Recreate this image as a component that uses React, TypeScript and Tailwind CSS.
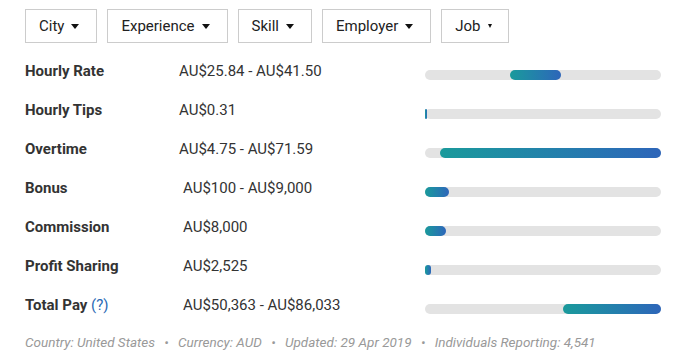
const filters = [
  { label: "City", small: false },
  { label: "Experience", small: false },
  { label: "Skill", small: false },
  { label: "Employer", small: false },
  { label: "Job", small: true },
];

const rows = [
  { label: "Hourly Rate", value: "AU$25.84 - AU$41.50", from: 36, to: 57.5, shift: false },
  { label: "Hourly Tips", value: "AU$0.31", from: 0, to: 0.8, shift: false },
  { label: "Overtime", value: "AU$4.75 - AU$71.59", from: 6.4, to: 100, shift: false },
  { label: "Bonus", value: "AU$100 - AU$9,000", from: 0, to: 10, shift: true },
  { label: "Commission", value: "AU$8,000", from: 0, to: 8.8, shift: true },
  { label: "Profit Sharing", value: "AU$2,525", from: 0, to: 2.6, shift: true },
  { label: "Total Pay", value: "AU$50,363 - AU$86,033", from: 58.5, to: 100, shift: true, help: true },
];

function Caret({ small }: { small: boolean }) {
  return small ? (
    <span className="inline-block w-0 h-0 border-l-[2.5px] border-r-[2.5px] border-t-[4px] border-l-transparent border-r-transparent border-t-[#111]" />
  ) : (
    <span className="inline-block w-0 h-0 border-l-[4.5px] border-r-[4.5px] border-t-[5px] border-l-transparent border-r-transparent border-t-[#111]" />
  );
}

export default function App() {
  return (
    <div className="w-[679px] h-[361px] bg-white text-[#333] font-['Roboto',sans-serif] overflow-hidden">
      {/* filters */}
      <div className="flex gap-[10px] pl-[25px] pt-[9px]">
        {filters.map((f) => (
          <div
            key={f.label}
            className={`h-[34px] flex items-center gap-[7px] pl-[13px] border border-[#cccccc] bg-white text-[15px] text-[#222] ${f.small ? "pr-[16px]" : "pr-[17px]"}`}
          >
            <span>{f.label}</span>
            <Caret small={f.small} />
          </div>
        ))}
      </div>

      {/* rows */}
      <div className="flex flex-col pl-[25px] pt-[9px]">
        {rows.map((r) => (
          <div key={r.label} className="h-[39px] flex items-center text-[15px]">
            <div className="w-[154px] font-bold">
              {r.label}
              {r.help && <span className="font-normal text-[#2a6ab5]"> (?)</span>}
            </div>
            <div className={`w-[246px] ${r.shift ? "pl-[4px]" : ""}`}>{r.value}</div>
            <div className="relative w-[236px] h-[10px] mt-[6px] rounded-full bg-[#e3e3e3]">
              <div
                className="absolute top-0 h-full rounded-full bg-gradient-to-r from-[#1a9a9b] to-[#2d65b9]"
                style={{ left: `${r.from}%`, width: `max(${r.to - r.from}%, 2px)` }}
              />
            </div>
          </div>
        ))}
      </div>

      {/* footer */}
      <div className="pl-[25px] pt-[8px] text-[13.5px] italic text-[#999999] leading-[18px]">
        Country: United States <span className="mx-[6px]">•</span> Currency: AUD{" "}
        <span className="mx-[6px]">•</span> Updated: 29 Apr 2019 <span className="mx-[6px]">•</span> Individuals
        Reporting: 4,541
      </div>
    </div>
  );
}
